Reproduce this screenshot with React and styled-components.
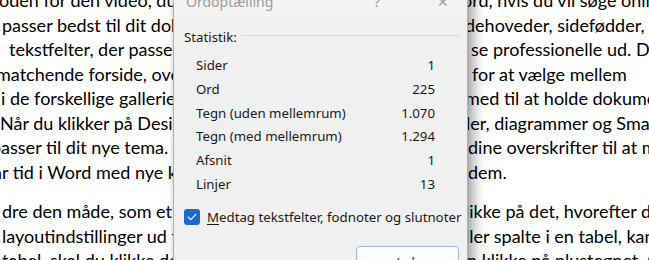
import React from 'react';
import styled, { createGlobalStyle } from 'styled-components';

const GlobalStyle = createGlobalStyle`
  html, body {
    margin: 0;
    padding: 0;
    background: #ffffff;
  }
  body {
    width: 649px;
    height: 260px;
    overflow: hidden;
  }
`;

const Page = styled.div`
  position: relative;
  width: 649px;
  height: 260px;
  overflow: hidden;
  background: #ffffff;
`;

const Document = styled.div`
  margin-top: -12px;
  font-family: Lato, 'Open Sans', sans-serif;
  font-size: 18px;
  line-height: 24.5px;
  color: #000000;
`;

const Line = styled.div`
  display: grid;
  grid-template-columns: 174px 293px 1fr;
  margin-top: ${(p) => (p.$newParagraph ? '15px' : '0')};
  white-space: nowrap;
`;

const Cell = styled.div`
  overflow: hidden;
`;

const Words = styled.span`
  display: inline-block;
  margin-left: ${(p) => p.$offset || 0}px;
`;

const Dialog = styled.div`
  position: absolute;
  top: -30px;
  left: 173px;
  width: 293px;
  display: flex;
  flex-direction: column;
  background: #f0f0f0;
  border: 1px solid #b0b0b0;
  box-shadow: 6px 4px 12px rgba(0, 0, 0, 0.34), 0 0 4px rgba(0, 0, 0, 0.12);
  font-family: 'Noto Sans', 'Open Sans', sans-serif;
  font-size: 13.25px;
  color: #1a1a1a;
`;

const TitleBar = styled.div`
  height: 45px;
  box-sizing: border-box;
  padding: 21px 0 0 12px;
  display: flex;
  align-items: flex-start;
  background: #f3f3f3;
  color: #9c9c9c;
  font-size: 14px;
  line-height: 20px;
`;

const Title = styled.span`
  flex: 1;
`;

const TitleGlyph = styled.span`
  width: ${(p) => p.$width}px;
  margin-right: ${(p) => p.$after || 0}px;
  text-align: center;
  font-size: 14px;
`;

const Body = styled.div`
  display: flex;
  flex-direction: column;
  padding: 11px 8px 0 10px;
`;

const GroupHeader = styled.div`
  display: flex;
  align-items: center;
  gap: 4px;
  line-height: 20px;
`;

const Rule = styled.div`
  flex: 1;
  height: 1px;
  margin-top: -3px;
  background: #dadada;
`;

const StatList = styled.div`
  display: flex;
  flex-direction: column;
  margin-top: 7px;
  padding: 0 24px 0 12px;
`;

const StatRow = styled.div`
  display: flex;
  justify-content: space-between;
  height: 23.8px;
  line-height: 23.8px;
`;

const CheckRow = styled.label`
  display: flex;
  align-items: center;
  gap: 7px;
  margin-top: 11px;
  line-height: 18px;
  white-space: nowrap;
`;

const CheckBox = styled.span`
  flex: none;
  width: 16px;
  height: 16px;
  border-radius: 3px;
  background: #1b6acb;
  display: flex;
  align-items: center;
  justify-content: center;
`;

const AccessKey = styled.span`
  text-decoration: underline;
  text-underline-offset: 2px;
`;

const ButtonRow = styled.div`
  display: flex;
  justify-content: flex-end;
  margin-top: 20px;
`;

const Button = styled.button`
  width: 103px;
  height: 32px;
  border: 1px solid #93bde8;
  border-radius: 4px;
  background: #fdfdfd;
  font-family: 'Noto Sans', 'Open Sans', sans-serif;
  font-size: 13.25px;
  color: #1a1a1a;
  padding: 0;
`;

const lines = [
  { left: 'oden for den video, du', lo: -1, mid: 'vil tilføje. Du kan også skrive et nøgle', right: 'ord, hvis du vil søge online efter', ro: -5 },
  { left: 'passer bedst til dit dokument.', lo: 2, mid: 'Word indeholder si', right: 'dehoveder, sidefødder, forsider og', ro: -2 },
  { left: 'tekstfelter, der passer sammen,', lo: 9, mid: 'så dine dokumenter kommer til at', right: 'se professionelle ud. Du kan', ro: 4 },
  { left: 'matchende forside, overskrift', lo: -4, mid: 'og sidepanel. Klik på Indsæt', right: 't for at vælge mellem', ro: -6 },
  { left: 'i de forskellige gallerier.', lo: 1, mid: 'Temaer og typografier er også', right: 'med til at holde dokumentet', ro: -2 },
  { left: 'Når du klikker på Design og', lo: 0, mid: 'vælger et nyt tema, ændres bille', right: 'ler, diagrammer og SmartArt-grafik,', ro: -1 },
  { left: 'passer til dit nye tema. Når', lo: -9, mid: 'du anvender typografier, ændres', right: 'dine overskrifter til at matche', ro: 1 },
  { left: 'ar tid i Word med nye knapper', lo: -7, mid: 'der vises, hvor du har brug for', right: 'dem.', ro: 1 },
  { left: 'dre den måde, som et billede', lo: 2, mid: 'passer ind i dokumentet, skal du k', right: 'likke på det, hvorefter der vises', ro: -2, para: true },
  { left: 'layoutindstillinger ud for billedet.', lo: 2, mid: 'Når du tilføjer en række e', right: 'ller spalte i en tabel, kan du', ro: -2 },
  { left: 'tabel, skal du klikke der, hvor', lo: 2, mid: 'du vil tilføje en række, og derefter ka', right: 'n klikke på plustegnet. Også kan', ro: 0 },
];

const stats = [
  ['Sider', '1'],
  ['Ord', '225'],
  ['Tegn (uden mellemrum)', '1.070'],
  ['Tegn (med mellemrum)', '1.294'],
  ['Afsnit', '1'],
  ['Linjer', '13'],
];

const CheckMark = () => (
  <svg width="10" height="8" viewBox="0 0 10 8" fill="none">
    <path d="M1.2 4.2 L3.8 6.6 L8.8 1.4" stroke="#ffffff" strokeWidth="1.2" strokeLinecap="round" strokeLinejoin="round" />
  </svg>
);

const App = () => (
  <>
    <GlobalStyle />
    <Page>
      <Document>
        {lines.map((l, i) => (
          <Line key={i} $newParagraph={l.para}>
            <Cell>
              <Words $offset={l.lo}>{l.left}</Words>
            </Cell>
            <Cell>
              <Words>{l.mid}</Words>
            </Cell>
            <Cell>
              <Words $offset={l.ro}>{l.right}</Words>
            </Cell>
          </Line>
        ))}
      </Document>

      <Dialog>
        <TitleBar>
          <Title>Ordoptælling</Title>
          <TitleGlyph $width={40} $after={22}>?</TitleGlyph>
          <TitleGlyph $width={48}>✕</TitleGlyph>
        </TitleBar>
        <Body>
          <GroupHeader>
            Statistik:
            <Rule />
          </GroupHeader>
          <StatList>
            {stats.map(([label, value]) => (
              <StatRow key={label}>
                <span>{label}</span>
                <span>{value}</span>
              </StatRow>
            ))}
          </StatList>
          <CheckRow>
            <CheckBox>
              <CheckMark />
            </CheckBox>
            <span>
              <AccessKey>M</AccessKey>edtag tekstfelter, fodnoter og slutnoter
            </span>
          </CheckRow>
          <ButtonRow>
            <Button>Luk</Button>
          </ButtonRow>
        </Body>
      </Dialog>
    </Page>
  </>
);

export default App;
